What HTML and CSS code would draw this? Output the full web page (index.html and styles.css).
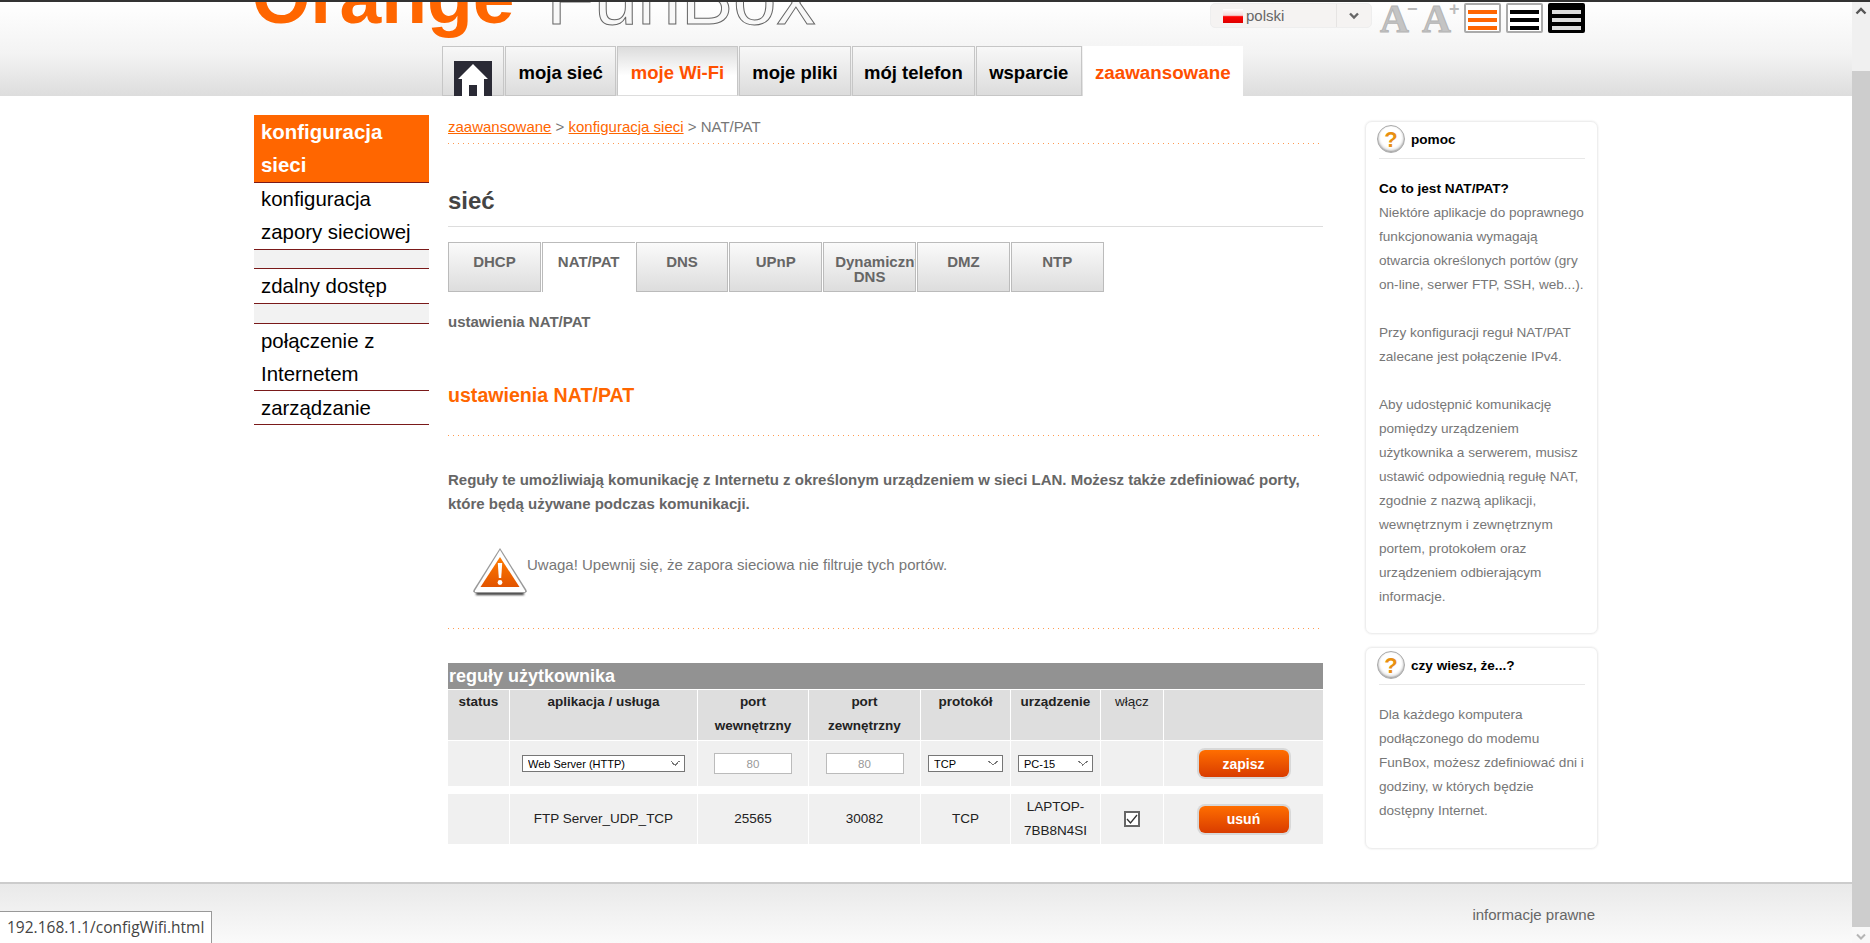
FILE: index.html
```html
<!DOCTYPE html>
<html lang="pl">
<head>
<meta charset="utf-8">
<title>Orange FunBox</title>
<link rel="stylesheet" href="styles.css">
</head>
<body>
<div class="topline"></div>
<div class="window">
  <div class="page">
    <header class="header">
      <div class="header-top">
        <div class="logo"><span class="logo-orange">Orange</span><span class="logo-funbox">FunBox</span></div>
        <div class="tools">
          <div class="lang">
            <span class="flag"></span><span class="lang-name">polski</span>
            <span class="lang-arrow"><svg width="12" height="8" viewBox="0 0 12 8"><path d="M2 1.5 6 5.5 10 1.5" fill="none" stroke="#666" stroke-width="2.4"/></svg></span>
          </div>
          <span class="font-btn">A<i class="font-mark">−</i></span>
          <span class="font-btn">A<i class="font-mark">+</i></span>
          <span class="contrast contrast-orange"><b></b><b></b><b></b></span>
          <span class="contrast contrast-black"><b></b><b></b><b></b></span>
          <span class="contrast contrast-inverse"><b></b><b></b><b></b></span>
        </div>
      </div>
      <nav class="nav">
        <a class="nav-tab nav-home"><span class="home-box"><svg width="38" height="35" viewBox="0 0 38 35"><path d="M19 3 34 18H30V35H23V24H15V35H8V18H4Z" fill="#fff"/></svg></span></a>
        <a class="nav-tab">moja sieć</a>
        <a class="nav-tab nav-wifi">moje Wi-Fi</a>
        <a class="nav-tab">moje pliki</a>
        <a class="nav-tab nav-tight">mój telefon</a>
        <a class="nav-tab">wsparcie</a>
        <a class="nav-tab nav-active">zaawansowane</a>
      </nav>
    </header>

    <div class="content">
      <aside class="side">
        <a class="side-item side-active side-pad">konfiguracja sieci</a>
        <a class="side-item">konfiguracja zapory sieciowej</a>
        <div class="side-gap side-gap-short"></div>
        <a class="side-item side-pad">zdalny dostęp</a>
        <div class="side-gap"></div>
        <a class="side-item side-nudge-two">połączenie z Internetem</a>
        <a class="side-item side-nudge-one">zarządzanie</a>
      </aside>

      <main class="main">
        <div class="crumbs"><a>zaawansowane</a> &gt; <a>konfiguracja sieci</a> &gt; NAT/PAT</div>
        <h1 class="title">sieć</h1>
        <div class="tabs">
          <a class="tab">DHCP</a>
          <a class="tab tab-active">NAT/PAT</a>
          <a class="tab">DNS</a>
          <a class="tab">UPnP</a>
          <a class="tab">Dynamiczny DNS</a>
          <a class="tab">DMZ</a>
          <a class="tab">NTP</a>
        </div>
        <div class="subtitle">ustawienia NAT/PAT</div>
        <h2 class="section">ustawienia NAT/PAT</h2>
        <p class="lead">Reguły te umożliwiają komunikację z Internetu z określonym urządzeniem w sieci LAN. Możesz także zdefiniować porty, które będą używane podczas komunikacji.</p>
        <div class="warning">
          <svg class="warn-icon" width="56" height="52" viewBox="0 0 56 52">
            <defs>
              <linearGradient id="wg" x1="0" y1="0" x2="0" y2="1"><stop offset="0" stop-color="#ff7a00"/><stop offset="1" stop-color="#e25400"/></linearGradient>
              <filter id="wb" x="-20%" y="-100%" width="140%" height="300%"><feGaussianBlur stdDeviation="1.300"/></filter>
              <filter id="wt" x="-10%" y="-10%" width="120%" height="120%"><feGaussianBlur stdDeviation="0.700"/></filter>
            </defs>
            <path d="M4 45H52V48H4Z" fill="#333" filter="url(#wb)"/>
            <path d="M28 1 54.500 43Q55.500 46 52 46H4Q.5 46 1.500 43Z" fill="#999" filter="url(#wt)"/>
            <path d="M28 3 53 43.500Q53.500 45 52 45H4Q2.500 45 3 43.500Z" fill="#fff"/>
            <path d="M28 10 47.500 40H8.500Z" fill="url(#wg)"/>
            <path d="M25.800 16H30.200L29.200 31H26.800Z" fill="#fff"/>
            <circle cx="28" cy="35.500" r="2.400" fill="#fff"/>
          </svg>
          <span class="warn-text">Uwaga! Upewnij się, że zapora sieciowa nie filtruje tych portów.</span>
        </div>

        <div class="rules">
          <div class="rules-title">reguły użytkownika</div>
          <div class="row row-head">
            <div class="cell">status</div>
            <div class="cell">aplikacja / usługa</div>
            <div class="cell">port<br>wewnętrzny</div>
            <div class="cell">port<br>zewnętrzny</div>
            <div class="cell">protokół</div>
            <div class="cell">urządzenie</div>
            <div class="cell cell-plain">włącz</div>
            <div class="cell"></div>
          </div>
          <div class="row row-form">
            <div class="cell"></div>
            <div class="cell"><select class="sel sel-app"><option>Web Server (HTTP)</option></select></div>
            <div class="cell"><input class="port" type="text" value="80" disabled></div>
            <div class="cell"><input class="port" type="text" value="80" disabled></div>
            <div class="cell"><select class="sel sel-small"><option>TCP</option></select></div>
            <div class="cell"><select class="sel sel-small"><option>PC-15</option></select></div>
            <div class="cell"></div>
            <div class="cell"><button class="btn">zapisz</button></div>
          </div>
          <div class="row row-data">
            <div class="cell"></div>
            <div class="cell">FTP Server_UDP_TCP</div>
            <div class="cell">25565</div>
            <div class="cell">30082</div>
            <div class="cell">TCP</div>
            <div class="cell">LAPTOP-<br>7BB8N4SI</div>
            <div class="cell"><span class="check"><svg width="12" height="12" viewBox="0 0 12 12"><path d="M1 6 4.500 10 11 2" fill="none" stroke="#333" stroke-width="1.300"/></svg></span></div>
            <div class="cell"><button class="btn">usuń</button></div>
          </div>
        </div>
      </main>

      <aside class="help">
        <section class="box">
          <div class="box-head"><span class="q-icon">?</span><span class="box-title">pomoc</span></div>
          <div class="box-body">
            <p class="para"><strong class="para-title">Co to jest NAT/PAT?</strong><br>Niektóre aplikacje do poprawnego funkcjonowania wymagają otwarcia określonych portów (gry on-line, serwer FTP, SSH, web...).</p>
            <p class="para">Przy konfiguracji reguł NAT/PAT zalecane jest połączenie IPv4.</p>
            <p class="para para-last">Aby udostępnić komunikację pomiędzy urządzeniem użytkownika a serwerem, musisz ustawić odpowiednią regułę NAT, zgodnie z nazwą aplikacji, wewnętrznym i zewnętrznym portem, protokołem oraz urządzeniem odbierającym informacje.</p>
          </div>
        </section>
        <section class="box">
          <div class="box-head"><span class="q-icon">?</span><span class="box-title">czy wiesz, że...?</span></div>
          <div class="box-body box-body-alt">
            <p class="para para-last">Dla każdego komputera podłączonego do modemu FunBox, możesz zdefiniować dni i godziny, w których będzie dostępny Internet.</p>
          </div>
        </section>
      </aside>
    </div>

    <footer class="footer"><a class="footer-link">informacje prawne</a></footer>
  </div>

  <div class="scrollbar">
    <div class="sb-up"><svg width="12" height="8" viewBox="0 0 12 8"><path d="M1.500 6.500 6 2 10.500 6.500" fill="none" stroke="#555" stroke-width="2.400"/></svg></div>
    <div class="sb-thumb"></div>
    <div class="sb-down"><svg width="10" height="7" viewBox="0 0 10 7"><path d="M1 1.500 5 5.500 9 1.500" fill="none" stroke="#b5b5b5" stroke-width="2"/></svg></div>
  </div>
</div>
<div class="status">192.168.1.1/configWifi.html</div>
</body>
</html>
```
FILE: styles.css
```css
* { box-sizing: border-box; }
html, body { margin: 0; height: 100%; overflow: hidden; }
body { font-family: "Liberation Sans", Arial, sans-serif; color: #666; background: #fff; }
.topline { height: 2px; background: #333; }
.window { display: flex; height: 941px; }
.page { width: 1852px; display: flex; flex-direction: column; overflow: hidden; }

/* header */
.header { height: 94px; flex: none; overflow: hidden; display: flex; flex-direction: column; background: linear-gradient(#fff, #f3f3f3 55%, #ddd); }
.header-top { height: 44px; display: flex; flex: none; }
.logo { margin: -42px 0 0 252px; display: flex; height: 86px; line-height: 74px; white-space: nowrap; }
.logo-orange { font-size: 75px; font-weight: 700; color: #ff6600; }
.logo-funbox { font-size: 78px; margin-left: 32px; color: #f8f8f8; -webkit-text-stroke: 1px #666; }
.tools { margin-left: auto; margin-right: 262px; display: flex; align-items: flex-start; padding-top: 1px; }
.lang { width: 162px; height: 25px; margin-right: 8px; display: flex; align-items: center; padding-left: 12px; background: #f5f3f2; border: 1px solid #eee; border-radius: 5px; font-size: 15px; color: #666; }
.flag { width: 20px; height: 14px; background: linear-gradient(#fff 0, #f4d8d8 45%, #f00 55%, #d00 100%); }
.lang-name { margin-left: 3px; }
.lang-arrow { margin-left: auto; width: 35px; height: 100%; display: flex; align-items: center; justify-content: center; border-left: 1px solid #e6e4e3; }
.font-btn { width: 37px; height: 30px; margin-right: 5px; display: flex; font-family: "Liberation Serif", serif; font-weight: 700; font-size: 40px; line-height: 32px; color: #c4c4c4; -webkit-text-stroke: 1px #b4b4b4; }
.font-mark { font-family: "Liberation Sans", sans-serif; font-style: normal; font-weight: 700; font-size: 18px; line-height: 12px; margin-left: -2px; color: #bbb; -webkit-text-stroke: 0; }
.contrast { width: 37px; height: 30px; margin-right: 5px; padding: 5px 2px 0; display: flex; flex-direction: column; gap: 4px; border: 2px solid #aaa; border-radius: 2px; background: #fff; }
.contrast b { display: block; height: 4px; background: #000; }
.contrast-orange b { background: #ff6600; }
.contrast-inverse { background: #000; border-color: #000; }
.contrast-inverse b { background: #ddd; }
.nav { margin-left: 442px; height: 50px; display: flex; gap: 1px; }
.nav-tab { display: block; height: 50px; padding: 14px 12.500px 0; line-height: 24px; font-size: 18.500px; font-weight: 700; color: #000; border: 1px solid #c6c6c6; background: linear-gradient(#f8f8f8, #dcdcdc); }
.nav-tight { padding: 14px 11px 0; }
.nav-home { width: 62px; padding: 14px 0 0 11px; }
.home-box { display: block; width: 38px; height: 35px; background: #2a2a35; }
.home-box svg { display: block; }
.nav-wifi { color: #ff5000; background: linear-gradient(#dcdcdc, #fff 60%); border-bottom-color: #ddd; }
.nav-active { color: #ff5000; background: #fff; border: 0; padding: 15px 12px 0; font-size: 18.800px; }

/* layout */
.content { flex: 1; display: flex; padding: 19px 0 0 254px; }
.side { width: 175px; flex: none; }
.side-item { display: block; padding: 0 7px; font-size: 20.400px; line-height: 33px; color: #000; border-bottom: 1px solid #7a1a1a; }
.side-pad { padding-top: 1px; }
.side-nudge-two { padding-top: 1px; height: 67px; }
.side-nudge-one { padding-top: 1px; height: 34px; }
.side-active { background: #ff6600; color: #fff; font-weight: 700; }
.side-gap { height: 20px; background: #f2f2f2; border-bottom: 1px solid #7a1a1a; }
.side-gap-short { height: 19px; }
.main { width: 875px; flex: none; margin-left: 19px; }
.crumbs { height: 29px; line-height: 24px; font-size: 15px; color: #777; background: linear-gradient(to right, #ff9a50 1px, transparent 1px) left bottom / 5px 1px repeat-x; }
.crumbs a { color: #ff6600; text-decoration: underline; }
.title { margin: 42px 0 0; height: 41px; line-height: 30px; font-size: 24px; font-weight: 700; color: #444; border-bottom: 1px solid #ddd; }
.tabs { margin-top: 15px; height: 50px; display: grid; grid-template-columns: repeat(7, 92.800px); column-gap: 1px; }
.tab { height: 50px; padding: 11px 11px 0; overflow: hidden; text-align: center; line-height: 15px; font-size: 15px; font-weight: 700; color: #666; border: 1px solid #bbb; background: linear-gradient(#fafafa, #ddd); }
.tab-active { background: #fff; border-bottom: 0; border-right: 0; }
.subtitle { margin-top: 18px; line-height: 24px; font-size: 15px; font-weight: 700; color: #666; }
.section { margin: 46px 0 0; height: 56px; line-height: 30px; font-size: 19.600px; font-weight: 700; color: #ff6600; background: linear-gradient(to right, #ff9a50 1px, transparent 1px) left bottom / 5px 1px repeat-x; }
.lead { margin: 32px 0 0; line-height: 24px; font-size: 15px; font-weight: 700; color: #666; }
.warning { margin-top: 30px; height: 83px; display: flex; padding-left: 24px; background: linear-gradient(to right, #ff9a50 1px, transparent 1px) left bottom / 5px 1px repeat-x; }
.warn-icon { display: block; margin-top: 1px; flex: none; }
.warn-text { margin: 7px 0 0 -1px; line-height: 24px; font-size: 15px; color: #777; }

/* rules table */
.rules { margin-top: 34px; }
.rules-title { height: 26px; line-height: 26px; padding-left: 1px; font-size: 18px; font-weight: 700; color: #fff; background: #929292; }
.row { display: grid; grid-template-columns: 61px 187px 110px 111px 89px 89px 62px 1fr; column-gap: 1px; text-align: center; }
.cell { display: flex; align-items: center; justify-content: center; }
.row-head { margin-top: 1px; height: 50px; }
.row-head .cell { display: block; background: #dedede; line-height: 24px; font-size: 13.500px; font-weight: 700; color: #222; }
.row-head .cell-plain { font-weight: 400; }
.row-form { margin-top: 1px; height: 45px; }
.row-form .cell { background: #f0f0f0; }
.row-data { margin-top: 8px; height: 50px; }
.row-data .cell { background: #f0f0f0; line-height: 24px; font-size: 13.500px; color: #222; }
.sel {
  height: 17px; padding: 0 0 0 5px; font: 11px "Liberation Sans", Arial, sans-serif; color: #000;
  appearance: none; border: 1px solid #767676; border-radius: 0; background-color: #fff;
  background-image: linear-gradient(45deg, transparent 50%, #777 50%, #777 68%, transparent 68%), linear-gradient(-45deg, transparent 50%, #777 50%, #777 68%, transparent 68%);
  background-size: 5px 5px, 5px 5px; background-repeat: no-repeat; background-position: right 9px center, right 4px center;
}
.sel-app { width: 163px; }
.sel-small { width: 75px; }
.port { width: 78px; height: 21px; padding: 0; text-align: center; font: 11.500px "Liberation Sans", Arial, sans-serif; color: #999; background: #fff; border: 1px solid #bbb; }
.btn { width: 90px; height: 27px; padding: 0; font: 700 14px "Liberation Sans", Arial, sans-serif; color: #fff; border: 0; border-radius: 6px; background: linear-gradient(#ff6e00, #d93c00); box-shadow: 0 0 0 2px #d8d8d8; }
.check { width: 16px; height: 16px; display: block; padding: 0; border: 2px solid #666; background: #fff; }
.check svg { display: block; }

/* help */
.help { width: 233px; flex: none; margin: 6px 0 0 42px; display: flex; flex-direction: column; gap: 13px; }
.box { padding: 0 12px 0 13px; border: 1px solid #eee; border-radius: 7px; box-shadow: 0 0 2px #e2e2e2; }
.box-head { height: 37px; display: flex; align-items: flex-start; padding-top: 3px; border-bottom: 1px solid #e8e8e8; }
.q-icon { width: 28px; height: 28px; margin-left: -2px; flex: none; border-radius: 50%; text-align: center; line-height: 27px; font-size: 22px; font-weight: 700; color: #e89010; background: radial-gradient(circle at 50% 42%, #fff 50%, #c8c8c8 100%); border: 1px solid #aaa; box-shadow: inset 0 -1px 2px #999; }
.box-title { margin-left: 6px; padding-top: 3px; line-height: 24px; font-size: 13.600px; font-weight: 700; color: #000; }
.box-body { padding: 18px 0 24px; }
.box-body-alt { padding-top: 18px; padding-bottom: 25px; }
.para { margin: 0 0 24px; line-height: 24px; font-size: 13.600px; color: #777; }
.para-last { margin-bottom: 0; }
.para-title { color: #000; }

/* footer */
.footer { height: 61px; flex: none; padding: 19px 257px 0 0; text-align: right; border-top: 2px solid #ccc; background: linear-gradient(#e9e9e9, #fafafa); }
.footer-link { line-height: 24px; font-size: 15px; color: #666; }

/* scrollbar and status bubble */
.scrollbar { width: 18px; flex: none; display: flex; flex-direction: column; background: #f0f0f0; }
.sb-up { height: 69px; display: flex; justify-content: center; padding-top: 5px; }
.sb-up svg, .sb-down svg { display: block; }
.sb-thumb { flex: 1; background: #cdcdcd; }
.sb-down { height: 16px; display: flex; justify-content: center; padding-top: 6px; background: #f8f8f8; }
.status { position: fixed; left: 0; bottom: 0; width: 212px; height: 32px; padding-left: 7px; line-height: 31px; font-family: "Open Sans", sans-serif; font-size: 15.500px; color: #444; background: #fff; border: 1px solid #999; border-width: 1px 1px 0 0; }
```
